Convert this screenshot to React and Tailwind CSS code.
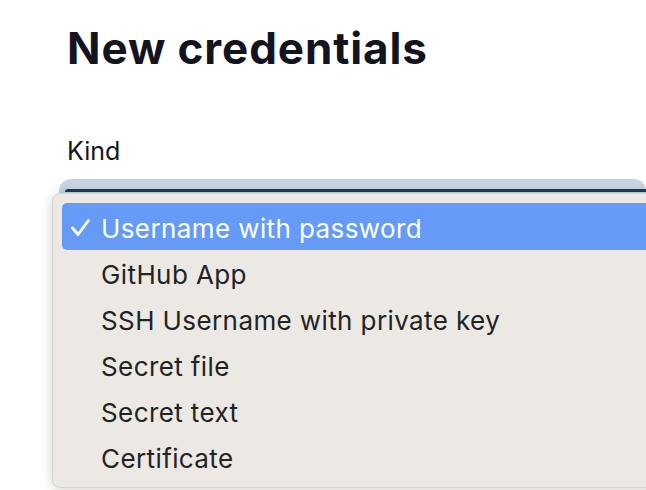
import React from "react";

const kinds = [
  "Username with password",
  "GitHub App",
  "SSH Username with private key",
  "Secret file",
  "Secret text",
  "Certificate",
];

export default function App() {
  return (
    <div className="relative h-[490px] w-[646px] overflow-hidden bg-white font-['Inter',sans-serif] text-[#14141f]">
      {/* HEADER */}
      <div className="pl-[67px] pt-[26px]">
        <h1 className="text-[44px] font-bold leading-none tracking-[0.9px]">New credentials</h1>
        <p className="mt-[69px] text-[25px] leading-none">Kind</p>
      </div>

      {/* SELECT */}
      <div className="ml-[59px] mt-[15px] h-[40px] rounded-t-[12px] bg-[#c6d4e0] pt-[10px] pl-[6px]">
        <div className="h-[3px] rounded-tl-[8px] bg-[#1b3a5c]" />
      </div>

      {/* MENU */}
      <div className="absolute left-[52px] top-[193px] -right-[20px] bottom-[2px] rounded-[8px] border border-[#d6d3cf] bg-[#ece9e5] pl-[9px] pt-[9px] shadow-[0_2px_12px_rgba(0,0,0,0.18)]">
        {kinds.map((k, i) => (
          <div
            key={k}
            className={
              i === 0
                ? "flex h-[47px] items-center rounded-[5px] bg-[#659bf6] text-white"
                : "flex h-[46px] items-center text-[#232323]"
            }
          >
            <span className="flex w-[39px] pl-[9px] pt-[2px]">
              {i === 0 && (
                <svg width="19" height="17" viewBox="0 0 19 17" fill="none">
                  <path d="M1.5 9 L7 15.5 L17.5 1.5" stroke="white" strokeWidth="2.8" strokeLinecap="round" strokeLinejoin="round" />
                </svg>
              )}
            </span>
            <span className="pt-[4px] text-[26px] leading-none tracking-[0.4px]">{k}</span>
          </div>
        ))}
      </div>
    </div>
  );
}
